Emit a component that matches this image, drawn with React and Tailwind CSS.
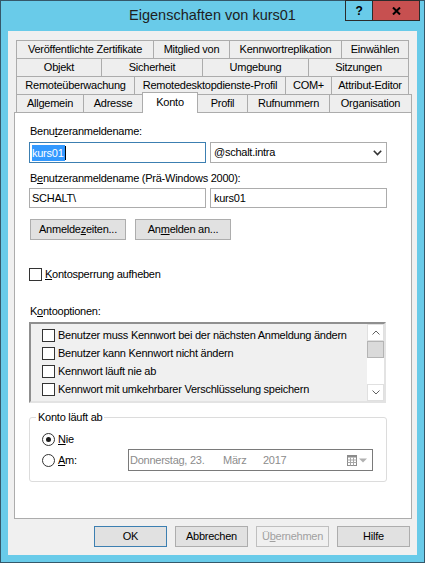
import React from 'react'

/* ── tab rows, top to bottom ── */
const TAB_ROWS = [
  [['Veröffentlichte Zertifikate', 'w-[138px]'], ['Mitglied von', 'w-[77px]'], ['Kennwortreplikation', 'w-[113px]'], ['Einwählen', 'w-[68px]']],
  [['Objekt', 'w-[86px]'], ['Sicherheit', 'w-[102px]'], ['Umgebung', 'w-[107px]'], ['Sitzungen', 'w-[101px]']],
  [['Remoteüberwachung', 'w-[119px]'], ['Remotedesktopdienste-Profil', 'w-[152px]'], ['COM+', 'w-[47px]'], ['Attribut-Editor', 'w-[78px]']],
]

const LAST_ROW = [
  ['Allgemein', 'w-[68px]'],
  ['Adresse', 'w-[60px]'],
  ['Konto', 'w-[56px]', true],
  ['Profil', 'w-[51px]'],
  ['Rufnummern', 'w-[83px]'],
  ['Organisation', 'w-[83px]'],
]

const OPTIONS = [
  'Benutzer muss Kennwort bei der nächsten Anmeldung ändern',
  'Benutzer kann Kennwort nicht ändern',
  'Kennwort läuft nie ab',
  'Kennwort mit umkehrbarer Verschlüsselung speichern',
]

function Tab({ label, w }) {
  return (
    <div className={`${w} h-[18px] -ml-px first:ml-0 flex items-center justify-center border border-b-0 border-[#acacac] bg-[#eeeeee] whitespace-nowrap`}>
      {label}
    </div>
  )
}

function Box() {
  return <div className="w-[13px] h-[13px] shrink-0 border border-[#333333] bg-white" />
}

function Chevron({ up }) {
  return (
    <svg width="8" height="5" viewBox="0 0 8 5">
      <path d={up ? 'M0.5 4.5 L4 1 L7.5 4.5' : 'M0.5 0.5 L4 4 L7.5 0.5'} fill="none" stroke="#606060" strokeWidth="1" />
    </svg>
  )
}

function Btn({ children, className = '' }) {
  return (
    <div className={`h-[21px] flex items-center justify-center border ${className}`}>
      {children}
    </div>
  )
}

export default function App() {
  return (
    <div className="relative w-[425px] h-[563px] flex flex-col border border-[#35586a] bg-[#69cbe9] font-['Liberation_Sans',Arial,sans-serif] text-[11px] leading-[15px] tracking-[-0.25px] text-black">
      {/* title bar */}
      <div className="h-[30px] flex items-center justify-center pb-px">
        <span className="text-[14.5px] tracking-normal text-[#1e1e1e]">Eigenschaften von kurs01</span>
      </div>
      <div className="absolute top-[-1px] right-[4px] flex">
        <div className="w-[28px] h-[21px] flex items-center justify-center border border-[#2b2b2b] bg-[#69cbe9]">
          <span className="text-[12px] font-bold leading-none">?</span>
        </div>
        <div className="w-[47px] h-[21px] flex items-center justify-center border border-l-0 border-[#2b2b2b] bg-[#c75050]">
          <svg width="9" height="8" viewBox="0 0 9 8">
            <path d="M1 0.5 L8 7.5 M8 0.5 L1 7.5" stroke="#000" strokeWidth="2" />
          </svg>
        </div>
      </div>

      {/* client */}
      <div className="mx-[7px] h-[524px] flex flex-col bg-[#f0f0f0]">
        {/* tab strip */}
        <div className="mt-[9px] ml-[8px] flex flex-col">
          {TAB_ROWS.map((row, i) => (
            <div key={i} className="flex h-[18px]">
              {row.map(([label, w]) => <Tab key={label} label={label} w={w} />)}
            </div>
          ))}
          <div className="flex items-end h-[18px]">
            {LAST_ROW.map(([label, w, sel]) =>
              sel ? (
                <div key={label} className={`${w} h-[21px] -ml-px -mb-px relative z-10 flex items-center justify-center pb-[2px] border border-b-0 border-[#acacac] bg-white`}>
                  {label}
                </div>
              ) : (
                <Tab key={label} label={label} w={w} />
              )
            )}
          </div>
        </div>

        {/* tab page */}
        <div className="ml-[6px] w-[398px] h-[407px] border border-[#acacac] bg-white">
          <div className="flex flex-col pl-[14px] pt-[11px]">
            <div className="ml-px h-[15px]">Benu<u>t</u>zeranmeldename:</div>
            <div className="mt-[3px] flex gap-[4px]">
              <div className="w-[177px] h-[21px] flex items-center pl-[2px] border border-[#3c7fb1] bg-white">
                <span className="bg-[#3399ff] text-white leading-[16px] pr-px">kurs01</span>
                <span className="w-px h-[14px] bg-black" />
              </div>
              <div className="w-[177px] h-[21px] flex items-center justify-between pl-[3px] pr-[4px] border border-[#acacac] bg-white">
                <span>@schalt.intra</span>
                <svg width="9" height="6" viewBox="0 0 9 6">
                  <path d="M0.8 0.8 L4.5 4.6 L8.2 0.8" fill="none" stroke="#333" strokeWidth="1.6" />
                </svg>
              </div>
            </div>

            <div className="mt-[8px] ml-px h-[15px]">B<u>e</u>nutzeranmeldename (Prä-Windows 2000):</div>
            <div className="mt-[2px] flex gap-[4px]">
              <div className="w-[177px] h-[20px] flex items-center pl-[2px] border border-[#acacac] bg-white">SCHALT\</div>
              <div className="w-[177px] h-[20px] flex items-center pl-[3px] border border-[#acacac] bg-white">kurs01</div>
            </div>

            <div className="mt-[11px] ml-px flex gap-[9px]">
              <Btn className="w-[96px] border-[#adadad] bg-[#e1e1e1]">Anmelde<u>z</u>eiten...</Btn>
              <Btn className="w-[96px] border-[#adadad] bg-[#e1e1e1]">An<u>m</u>elden an...</Btn>
            </div>

            <div className="mt-[27px] h-[15px] flex items-center">
              <Box />
              <span className="ml-[3px]"><u>K</u>ontosperrung aufheben</span>
            </div>

            <div className="mt-[22px] ml-px h-[15px]">K<u>o</u>ntooptionen:</div>
            <div className="mt-[3px] w-[357px] h-[81px] flex border-2 border-t-[#8f8f8f] border-l-[#8f8f8f] border-r-[#e3e3e3] border-b-[#e3e3e3] bg-[#f0f0f0]">
              <div className="flex-1 pt-[2px] pl-[11px]">
                {OPTIONS.map((o) => (
                  <div key={o} className="h-[18px] flex items-center">
                    <Box />
                    <span className="ml-[3px] whitespace-nowrap">{o}</span>
                  </div>
                ))}
              </div>
              <div className="w-[17px] flex flex-col bg-white">
                <div className="h-[17px] flex items-center justify-center border border-[#e0e0e0]"><Chevron up /></div>
                <div className="h-[17px] border border-[#b4b4b4] bg-[#dadada]" />
                <div className="flex-1" />
                <div className="h-[17px] flex items-center justify-center border border-[#e0e0e0]"><Chevron /></div>
              </div>
            </div>

            <div className="relative mt-[14px] w-[358px] h-[65px] rounded-[3px] border border-[#dcdcdc] pt-[13px] pl-[12px]">
              <span className="absolute left-[6px] top-[-8px] px-[2px] bg-white">Konto läuft ab</span>
              <div className="h-[16px] flex items-center">
                <div className="w-[13px] h-[13px] rounded-full border border-[#333333] bg-white flex items-center justify-center">
                  <div className="w-[5px] h-[5px] rounded-full bg-[#1a1a1a]" />
                </div>
                <span className="ml-[3px]"><u>N</u>ie</span>
              </div>
              <div className="mt-[2px] h-[22px] flex items-center">
                <div className="w-[13px] h-[13px] rounded-full border border-[#333333] bg-white" />
                <span className="ml-[3px] w-[70px]"><u>A</u>m:</span>
                <div className="w-[245px] h-[22px] flex items-center pl-[1px] pr-[5px] border border-[#7a7a7a] bg-white text-[#8c8c8c]">
                  <span className="w-[93px]">Donnerstag, 23.</span>
                  <span className="w-[40px]">März</span>
                  <span>2017</span>
                  <div className="ml-auto flex items-center gap-[2px]">
                    <svg width="10" height="11" viewBox="0 0 10 11">
                      <rect x="0.5" y="0.5" width="9" height="10" fill="#fff" stroke="#8c8c8c" />
                      <rect x="0.5" y="0.5" width="9" height="2" fill="#8c8c8c" />
                      <path d="M0.5 5 H9.5 M0.5 7.5 H9.5 M3.5 2.5 V10.5 M6.5 2.5 V10.5" stroke="#a8a8a8" strokeWidth="1" />
                    </svg>
                    <svg width="8" height="5" viewBox="0 0 8 5">
                      <path d="M0 0.5 H8 L4 4.5 Z" fill="#b0b0b0" />
                    </svg>
                  </div>
                </div>
              </div>
            </div>
          </div>
        </div>

        {/* dialog buttons */}
        <div className="mt-[7px] flex justify-end gap-[8px] pr-[7px]">
          <Btn className="w-[73px] border-[#3c7fb1] bg-[#e1e1e1]">OK</Btn>
          <Btn className="w-[73px] border-[#adadad] bg-[#e1e1e1]">Abbrechen</Btn>
          <Btn className="w-[73px] border-[#bfbfbf] bg-[#f0f0f0] text-[#a0a0a0]">Ü<u>b</u>ernehmen</Btn>
          <Btn className="w-[73px] border-[#adadad] bg-[#e1e1e1]">Hilfe</Btn>
        </div>
      </div>
    </div>
  )
}
